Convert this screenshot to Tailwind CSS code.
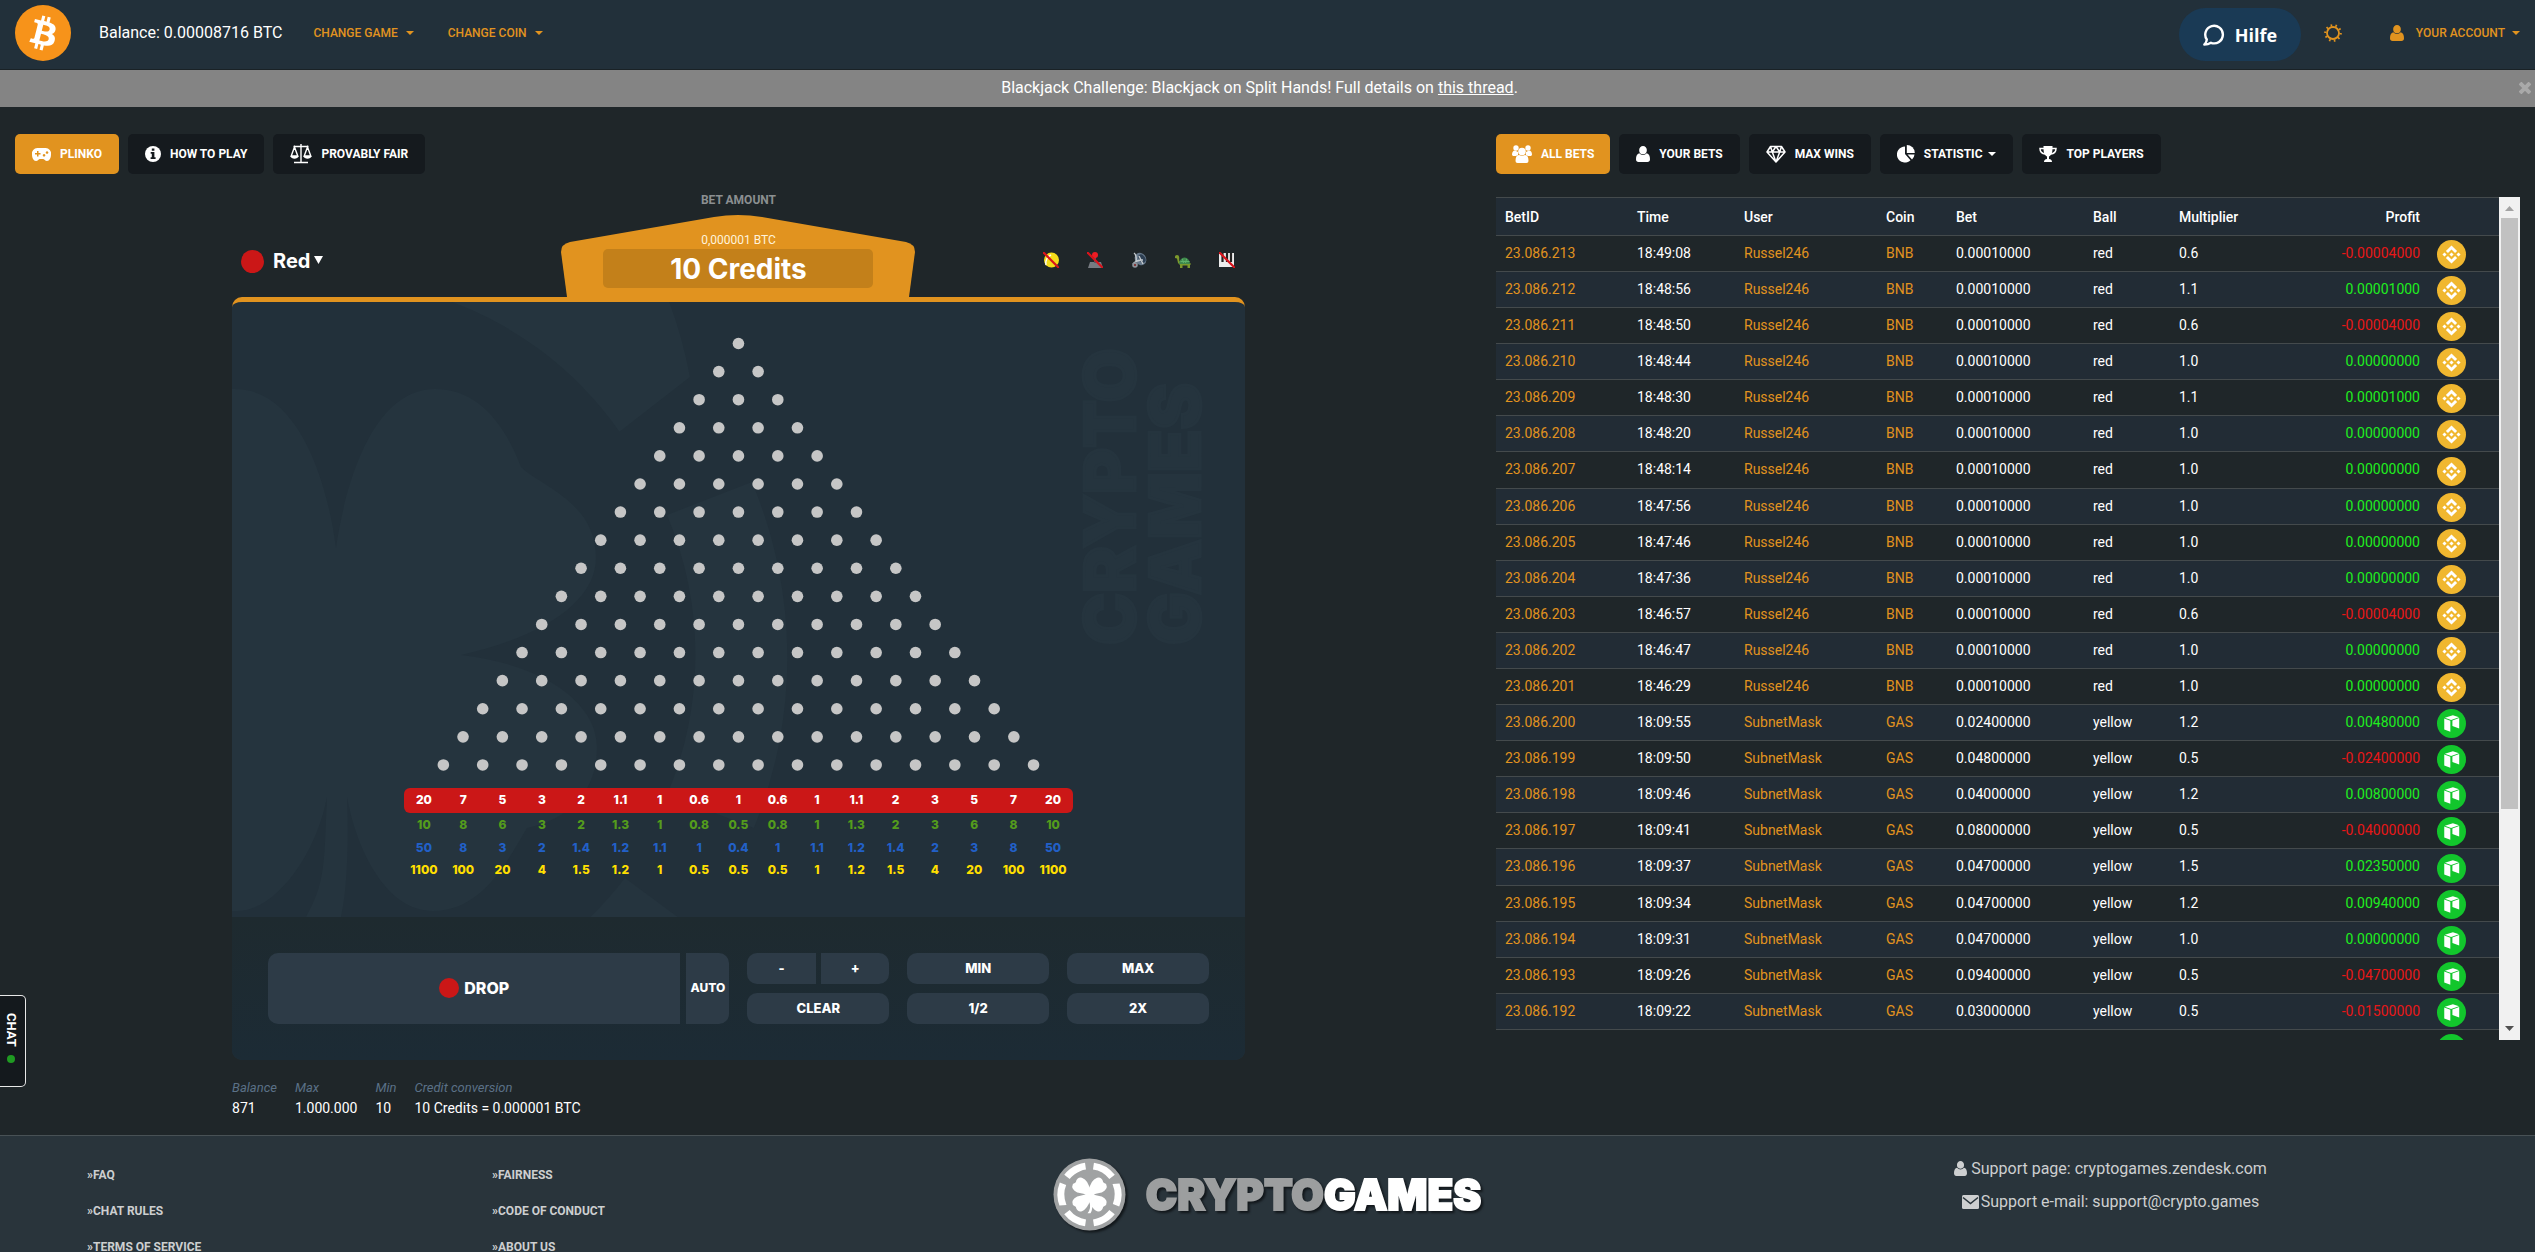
<!DOCTYPE html>
<html lang="en">
<head>
<meta charset="utf-8">
<meta name="viewport" content="width=device-width, initial-scale=1">
<title>Crypto.Games - Plinko</title>
<script src="https://cdn.jsdelivr.net/npm/@tailwindcss/browser@4"></script>
</head>
<body class="min-h-screen bg-[#1f2629] font-['Roboto',sans-serif] text-sm text-white">

<svg class="hidden" aria-hidden="true">
  <symbol id="user" viewBox="0 0 14 16"><path fill="currentColor" d="M7 0a3.8 3.8 0 0 1 3.8 4A4 4 0 0 1 7 8.200A4 4 0 0 1 3.200 4A3.800 3.800 0 0 1 7 0zM3.300 7.300A5 5 0 0 0 7 9a5 5 0 0 0 3.700-1.700C13 7.700 14 10 14 13.200C14 15 13 16 11.500 16h-9C1 16 0 15 0 13.200C0 10 1 7.700 3.300 7.300z"/></symbol>
  <symbol id="bnb" viewBox="0 0 32 32"><circle cx="16" cy="16" r="16" fill="#f0b72f"/><path fill="#fff" d="M12.100 14.400 16 10.500l3.900 3.900 2.300-2.300L16 6l-6.200 6.200zM6 16l2.300-2.300L10.500 16l-2.200 2.300zM12.100 17.600 16 21.500l3.900-3.900 2.300 2.200L16 26l-6.200-6.200zM21.500 16l2.200-2.300L26 16l-2.300 2.300zM18.300 16 16 18.300 13.700 16l2.300-2.300z"/></symbol>
  <symbol id="gas" viewBox="0 0 32 32"><circle cx="16" cy="16" r="16" fill="#12c62c"/><path fill="#fff" d="M8 10.500 14.700 13v12L8 22.600z"/><path fill="#fff" d="M8.700 9.700 17.500 7l6.800 2.200-8.800 3z"/><path fill="#fff" d="M17 12.600 24.500 10v11.500L17 18.700z"/></symbol>
</svg>

<header class="flex h-[70px] items-center border-b border-[#1a2226] bg-[#22303a] pr-[15px] pl-[15px]">
  <a href="#" aria-label="Bitcoin" class="-mt-1"><svg class="size-[56px]" viewBox="0 0 32 32"><circle cx="16" cy="16" r="16" fill="#f7931a"/><path fill="#fff" d="M23.189 14.020c.314-2.096-1.283-3.223-3.465-3.975l.708-2.840-1.728-.430-.690 2.765c-.454-.114-.920-.220-1.385-.326l.695-2.783L15.596 6l-.708 2.839c-.376-.086-.746-.170-1.104-.260l.002-.009-2.384-.595-.460 1.846s1.283.294 1.256.312c.700.175.826.638.805 1.006l-.806 3.235c.048.012.110.030.180.057l-.183-.045-1.130 4.532c-.086.212-.303.531-.793.410.018.025-1.256-.313-1.256-.313l-.858 1.978 2.250.561c.418.105.828.215 1.231.318l-.715 2.872 1.727.430.708-2.840c.472.127.930.245 1.378.357l-.706 2.828 1.728.430.715-2.866c2.948.558 5.164.333 6.097-2.333.752-2.146-.037-3.385-1.588-4.192 1.130-.260 1.980-1.003 2.207-2.538zm-3.950 5.538c-.533 2.147-4.148.986-5.320.695l.950-3.805c1.172.293 4.929.872 4.370 3.110zm.535-5.569c-.487 1.953-3.495.960-4.470.717l.860-3.450c.975.243 4.118.696 3.610 2.733z"/></svg></a>
  <span class="-mt-1 ml-[28px] text-base">Balance: 0.00008716 BTC</span>
  <nav class="-mt-1 ml-[31px] flex gap-[34px] text-xs font-medium text-[#e1931f]">
    <a href="#" class="flex items-center gap-[8px]">CHANGE GAME <svg class="h-1 w-2" viewBox="0 0 8 4"><path fill="currentColor" d="M0 0h8L4 4z"/></svg></a>
    <a href="#" class="flex items-center gap-[8px]">CHANGE COIN <svg class="h-1 w-2" viewBox="0 0 8 4"><path fill="currentColor" d="M0 0h8L4 4z"/></svg></a>
  </nav>
  <button class="ml-auto flex h-[53px] w-[122px] items-center justify-center gap-[10px] rounded-full bg-[#1a3a55] font-['Open_Sans',sans-serif] text-lg font-bold">
    <svg class="size-[22px]" viewBox="0 0 22 22" fill="none" stroke="#fff" stroke-width="2.400" stroke-linejoin="round"><path d="M3.800 15.500A8.800 8.800 0 1 1 8 18.800C6 20 3.500 20.500 1.300 20.500C2.800 19 3.800 17.500 3.800 15.500z"/></svg>
    Hilfe
  </button>
  <a href="#" aria-label="Theme" class="-mt-1 ml-[23px] text-[#e1931f]"><svg class="size-[18px]" viewBox="-9 -9 18 18"><circle r="6" fill="none" stroke="currentColor" stroke-width="1.800"/><circle r="7.700" fill="none" stroke="currentColor" stroke-width="2.200" pathLength="120" stroke-dasharray="4 8"/></svg></a>
  <a href="#" class="-mt-1 ml-[48px] flex items-center text-xs font-medium text-[#e1931f]"><svg class="mr-[12px] h-4 w-[14px]"><use href="#user"/></svg>YOUR ACCOUNT <svg class="ml-[7px] h-1 w-2" viewBox="0 0 8 4"><path fill="currentColor" d="M0 0h8L4 4z"/></svg></a>
</header>

<div class="flex h-[37px] items-center bg-[#848484] pr-1 pb-[2px] text-base">
  <p class="flex-1 text-center">Blackjack Challenge: Blackjack on Split Hands! Full details on <a href="#" class="underline">this thread</a>.</p>
  <button aria-label="Close"><svg class="size-3" viewBox="0 0 12 12" stroke="#a9a9a9" stroke-width="4"><path d="M1 1l10 10M11 1L1 11"/></svg></button>
</div>

<main class="flex gap-[34px] px-[15px] pt-[27px] pb-[17px]">
  <section class="min-w-0 flex-[1447]">
    <nav class="flex gap-[9px] text-xs font-bold">
      <a href="#" class="flex h-10 items-center gap-[9px] rounded-[5px] bg-[#e1931f] px-[17px]"><svg class="h-[13px] w-[19px]" viewBox="0 0 19 13"><path fill="#fff" fill-rule="evenodd" d="M5.500 0h8a5.500 5.500 0 0 1 5.500 6.500C19 10 17.500 13 15 13c-2 0-2.500-2-4-2H8c-1.500 0-2 2-4 2C1.500 13 0 10 0 6.500A5.500 5.500 0 0 1 5.500 0zM5 3v2H3v1.500h2v2h1.500v-2h2V5h-2V3zM12 6a1.300 1.300 0 1 0 .1 0zM15 3.200a1.300 1.300 0 1 0 .1 0z"/></svg>PLINKO</a>
      <a href="#" class="flex h-10 items-center gap-[9px] rounded-[5px] bg-[#151a1e] px-[17px]"><svg class="size-4" viewBox="0 0 16 16"><circle cx="8" cy="8" r="8" fill="#fff"/><path fill="#151a1e" d="M6.800 2.500h2.600v2.200H6.800zM5.700 6h3.700v5.200h1.200V13H5.600v-1.800h1.200V7.700H5.700z"/></svg>HOW TO PLAY</a>
      <a href="#" class="flex h-10 items-center gap-[9px] rounded-[5px] bg-[#151a1e] px-[17px]"><svg class="h-[20px] w-[22px]" viewBox="0 0 22 20" fill="none" stroke="#fff" stroke-width="1.400"><path d="M11 0v18M3.500 2.500h15M4 18.500h14"/><path d="M4.500 3L1.200 12h6.600zM17.500 3l-3.300 9h6.600z"/><path fill="#fff" stroke="none" d="M.5 12h8c-.5 3.500-7.500 3.500-8 0zM13.500 12h8c-.5 3.500-7.500 3.500-8 0z"/></svg>PROVABLY FAIR</a>
    </nav>

    <div class="mx-auto mt-[17px] w-[70%]">
      <div class="grid grid-cols-[1fr_354px_1fr]">
        <button class="mt-[55px] flex h-[30px] items-center gap-[9px] self-start pl-[9px] font-['Inter',sans-serif] text-xl font-bold">
          <span class="size-[23px] rounded-full bg-[#cb1717]"></span><span class="flex items-center gap-[4px]">Red<svg class="mb-[3px] h-2 w-[9px]" viewBox="0 0 9 8"><path fill="#fff" d="M0 0h9L4.500 8z"/></svg></span>
        </button>
        <div class="text-center">
          <label for="bet" class="block h-6 text-xs leading-[18px] font-bold text-[#8b8f91]">BET AMOUNT</label>
          <div class="relative h-[82px] pt-[17px]">
            <svg class="absolute inset-0 size-full" viewBox="0 0 354 82" preserveAspectRatio="none"><path fill="#e1931f" d="M6 82 0 37Q0 29 9 27L153 2Q177-2 201 2L345 27Q354 29 354 37L348 82z"/></svg>
            <p class="relative h-[17px] text-xs leading-[17px] text-[#fff3dc]">0,000001 BTC</p>
            <input id="bet" value="10 Credits" class="relative mx-auto block h-[39px] w-[270px] rounded-[5px] bg-[#c3801a] text-center font-['Inter',sans-serif] text-[28px] font-bold">
          </div>
        </div>
        <div class="mt-[61px] flex h-4 justify-end gap-7 pr-[10px]">
          <button aria-label="Ball"><svg class="size-4" viewBox="0 0 16 16"><circle cx="8.500" cy="8" r="7.500" fill="#f4dc1a"/><path d="M3 13A9 9 0 0 1 8 3" fill="none" stroke="#fff" stroke-width="1.500"/><path d="M0 0l16 16" stroke="#d8131b" stroke-width="2.200"/></svg></button>
          <button aria-label="Joystick"><svg class="size-4" viewBox="0 0 16 16"><path fill="#767a80" d="M3 10h11l2 6H1z"/><path stroke="#565a60" stroke-width="2" d="M8 4v7"/><circle cx="8" cy="3" r="3" fill="#ed1c24"/><path d="M0 0l16 16" stroke="#d8131b" stroke-width="2.200"/></svg></button>
          <button aria-label="Sound"><svg class="size-4" viewBox="0 0 16 16"><ellipse cx="9.500" cy="7" rx="5.500" ry="6.500" fill="#66788a" transform="rotate(-35 9.500 7)"/><ellipse cx="11" cy="6.500" rx="3" ry="4.500" fill="#2c3e52" transform="rotate(-35 11 6.500)"/><path d="M2 12Q5 8 12 8M3 1q3 2 2 9M8 4l4 8" fill="none" stroke="#c4cace" stroke-width="1.400"/><circle cx="4" cy="13" r="2.800" fill="#8c9299"/><circle cx="4" cy="13" r="1" fill="#7d1b1b"/></svg></button>
          <button aria-label="Slow"><svg class="size-4" viewBox="0 0 16 16"><path fill="#7d9a2c" d="M0 4.500Q0 3 2 3t2.200 2v3.500L6 11h9.500v2H15v3h-2.500v-2.500h-5V16H5v-3L3 11 2 6.500 0 6z"/><path fill="#3f8a4c" d="M4 12Q4.500 6 9.500 5.500 14.500 6 15 12z"/><path d="M7.500 7l1 4M11.500 7l-1 4M5.500 9.500h9" fill="none" stroke="#5fb36c"/></svg></button>
          <button aria-label="Piano"><svg class="size-4" viewBox="0 0 16 16"><path fill="#ececec" d="M0 1h15v14H0z"/><path d="M3.500 1v9M8 1v9M12 1v9" stroke="#222" stroke-width="2.200"/><path d="M0 0l16 16" stroke="#d8131b" stroke-width="2.200"/></svg></button>
        </div>
      </div>

      <div class="overflow-hidden rounded-[10px] border-t-[5px] border-[#e1931f] bg-[#22303a]">
        <div class="relative pb-9">
          <svg class="absolute inset-0 size-full" viewBox="0 0 1013 615" preserveAspectRatio="xMidYMid slice">
            <g fill="#25343e">
              <path d="M387.500 129.700A359 359 0 0 0 -25-3L30-100H385A452 452 0 0 1 458 75z"/>
              <path d="M435 213L520 180A452 452 0 0 1 522 526L435 493A359 359 0 0 0 435 213z"/>
              <path d="M393 576L459 625A452 452 0 0 1 445 640H330A359 359 0 0 0 393 576z"/>
              <path d="M-10 88Q2 86 14 88C72 98 97 190 104 246C112 190 138 87 203 87C245 87 272 120 289 165C310 185 364 200 364 256C364 300 310 335 229 353C310 362 365 400 365 445C365 500 325 520 295 526C275 560 250 609 201 609C155 609 125 550 115 495C117 540 115 590 109 615H74C94 580 92 560 95 495C85 550 45 609 5 609H-10z"/>
            </g>
            <g fill="#25343e" stroke="#25343e" stroke-width="3" font-family="Inter, sans-serif" font-weight="900" font-size="70"><text transform="translate(903 343) rotate(-90)">CRYPTO</text><text transform="translate(968 343) rotate(-90)">GAMES</text></g>
          </svg>
          <svg id="pegs" class="relative block w-full" viewBox="0 0 1013 486" fill="#c6c6c6"></svg>
          <table class="relative mx-auto w-[66%] table-fixed text-center font-['Inter',sans-serif] text-xs font-extrabold">
            <tbody id="odds"></tbody>
          </table>
        </div>
        <div class="flex gap-[18px] bg-linear-to-b from-[#1e2a2f] to-[#1c2b35] p-9 font-['Inter',sans-serif] text-[13px] font-extrabold">
          <div class="flex h-[71px] flex-[462] gap-[6px]">
            <button class="flex flex-1 items-center justify-center gap-[5px] rounded-l-[10px] bg-[#2d3b47] text-base"><span class="size-5 rounded-full bg-[#cb1717]"></span>DROP</button>
            <button class="w-[43px] rounded-r-[10px] bg-[#2d3b47] text-xs">AUTO</button>
          </div>
          <div class="grid flex-[142] grid-cols-2 grid-rows-2 gap-x-[5px] gap-y-[9px]">
            <button class="rounded-l-[10px] bg-[#2d3b47]">-</button>
            <button class="rounded-r-[10px] bg-[#2d3b47]">+</button>
            <button class="col-span-2 rounded-[10px] bg-[#2d3b47]">CLEAR</button>
          </div>
          <div class="grid flex-[142] grid-rows-2 gap-[9px]">
            <button class="rounded-[10px] bg-[#2d3b47]">MIN</button>
            <button class="rounded-[10px] bg-[#2d3b47]">1/2</button>
          </div>
          <div class="grid flex-[142] grid-rows-2 gap-[9px]">
            <button class="rounded-[10px] bg-[#2d3b47]">MAX</button>
            <button class="rounded-[10px] bg-[#2d3b47]">2X</button>
          </div>
        </div>
      </div>

      <dl class="mt-[18px] flex gap-[18px] leading-5">
        <div><dt class="text-[13px] leading-5 text-[#5b7187] italic">Balance</dt><dd>871</dd></div>
        <div><dt class="text-[13px] leading-5 text-[#5b7187] italic">Max</dt><dd>1.000.000</dd></div>
        <div><dt class="text-[13px] leading-5 text-[#5b7187] italic">Min</dt><dd>10</dd></div>
        <div><dt class="text-[13px] leading-5 text-[#5b7187] italic">Credit conversion</dt><dd>10 Credits = 0.000001 BTC</dd></div>
      </dl>
    </div>
  </section>

  <section class="min-w-0 flex-[1024]">
    <nav class="flex gap-[9px] text-xs font-bold">
      <a href="#" class="flex h-10 items-center gap-[9px] rounded-[5px] bg-[#e1931f] px-4"><svg class="h-[18px] w-[20px]" viewBox="0 0 20 18" fill="#fff"><circle cx="4" cy="3" r="2.700"/><circle cx="16" cy="3" r="2.700"/><circle cx="10" cy="6.500" r="3.800"/><path d="M0 10Q0 5.500 3 5.500l3 1.500v3l-2 1H1zM20 10q0-4.500-3-4.500L14 7v3l2 1h3zM3.500 16q0-6 3.500-6 3 1.500 6 0 3.500 0 3.500 6 0 2-2 2h-9q-2 0-2-2z"/></svg>ALL BETS</a>
      <a href="#" class="flex h-10 items-center gap-[9px] rounded-[5px] bg-[#151a1e] px-[17px]"><svg class="h-4 w-[14px]"><use href="#user"/></svg>YOUR BETS</a>
      <a href="#" class="flex h-10 items-center gap-[9px] rounded-[5px] bg-[#151a1e] px-[17px]"><svg class="h-[18px] w-[20px]" viewBox="0 0 20 18" fill="none" stroke="#fff" stroke-width="1.500" stroke-linejoin="round"><path d="M4.500 1.500h11L19 7l-9 10L1 7zM1 7h18M10 1.500L6.300 7 10 17l3.700-10zM4.500 1.500L6.300 7M15.500 1.500L13.700 7"/></svg>MAX WINS</a>
      <a href="#" class="flex h-10 items-center gap-[9px] rounded-[5px] bg-[#151a1e] px-[17px]"><svg class="size-[18px]" viewBox="0 0 18 18" fill="#fff"><path d="M8 1.500V9l5.500 6.200A8 8 0 1 1 8 1.500z"/><path d="M9.800 0A8 8 0 0 1 17.800 8h-8z"/><path d="M10.500 9.500h7a7.500 7.500 0 0 1-2.500 5z"/></svg><span class="flex items-center gap-[6px]">STATISTIC <svg class="h-1 w-2" viewBox="0 0 8 4"><path fill="currentColor" d="M0 0h8L4 4z"/></svg></span></a>
      <a href="#" class="flex h-10 items-center gap-[9px] rounded-[5px] bg-[#151a1e] px-[17px]"><svg class="h-4 w-[18px]" viewBox="0 0 18 16"><path fill="#fff" d="M4.500 0h9v2c0 5-1 7-3.500 8.500V13q3 .3 3 3H5q0-2.700 3-3v-2.500C5.500 9 4.500 7 4.500 2z"/><path d="M5 2.500H1Q1 7.500 6.500 8M13 2.500h4q0 5-5.500 5.500" fill="none" stroke="#fff" stroke-width="1.500"/></svg>TOP PLAYERS</a>
    </nav>

    <div class="mt-[23px] flex h-[843px]">
      <div class="min-w-0 flex-1 overflow-hidden">
        <table class="w-full table-fixed text-left">
          <colgroup><col class="w-[132px]"><col class="w-[107px]"><col class="w-[142px]"><col class="w-[70px]"><col class="w-[137px]"><col class="w-[86px]"><col class="w-[120px]"><col class="w-[139px]"><col class="w-[70px]"></colgroup>
          <thead>
            <tr class="h-[38px] border-y border-[#444a4c] bg-[#222c35]">
              <th class="px-[9px] font-medium">BetID</th><th class="px-[9px] font-medium">Time</th><th class="px-[9px] font-medium">User</th><th class="px-[9px] font-medium">Coin</th><th class="px-[9px] font-medium">Bet</th><th class="px-[9px] font-medium">Ball</th><th class="px-[9px] font-medium">Multiplier</th><th class="px-[9px] text-right font-medium">Profit</th><th></th>
            </tr>
          </thead>
          <tbody id="bets"></tbody>
        </table>
      </div>
      <div class="flex w-[21px] flex-col items-center bg-[#f1f1f1]" aria-hidden="true">
        <svg class="h-[21px] w-[9px]" viewBox="0 0 9 21"><path fill="#a3a3a3" d="M0 14h9L4.500 9z"/></svg>
        <div class="h-[591px] w-[17px] bg-[#c1c1c1]"></div>
        <svg class="mt-auto h-[21px] w-[9px]" viewBox="0 0 9 21"><path fill="#505050" d="M0 7h9l-4.500 5z"/></svg>
      </div>
    </div>
  </section>
</main>

<footer class="grid grid-cols-[405fr_405fr_914fr_773fr] border-t border-[#485155] bg-[#29343b] pr-[38px] pb-10 text-[#cdcfd0]">
  <ul class="flex flex-col gap-[18px] pt-[30px] pl-[87px] text-xs leading-[18px] font-bold">
    <li><a href="#">»FAQ</a></li><li><a href="#">»CHAT RULES</a></li><li><a href="#">»TERMS OF SERVICE</a></li>
  </ul>
  <ul class="flex flex-col gap-[18px] pt-[30px] pl-[87px] text-xs leading-[18px] font-bold">
    <li><a href="#">»FAIRNESS</a></li><li><a href="#">»CODE OF CONDUCT</a></li><li><a href="#">»ABOUT US</a></li>
  </ul>
  <a href="#" class="mt-[22px] flex h-[74px] items-center gap-5 self-start justify-self-center font-['Inter',sans-serif] text-[42px] font-black text-[#9c9e9f] drop-shadow-[2px_2px_1px_#11161a] [-webkit-text-stroke:2px_currentColor]">
    <svg class="size-[73px]" viewBox="-37 -37 74 74"><circle r="36.500" fill="#a0a2a3"/><circle r="29" fill="none" stroke="#fff" stroke-width="7" pathLength="360" stroke-dasharray="44 16" transform="rotate(-22)"/><g fill="#fff" stroke="#fff" stroke-width="2"><path d="M0 0Q-6-2-12-3Q-18-6-16-10Q-14-11-13-12Q-12-17-8-16Q-2-14 0-3Q2-14 8-16Q12-17 13-12Q14-11 16-10Q18-6 12-3Q6-2 1 0Q6 2 12 3Q18 6 16 10Q14 11 13 12Q12 17 8 16Q3 14 0 5Q-3 14-8 16Q-12 17-13 12Q-14 11-16 10Q-18 6-12 3z"/><path stroke="none" d="M0 8q2 6-2 11h3q3-5 1-11z"/></g></svg>
    <span>CRYPTO<span class="text-white">GAMES</span></span>
  </a>
  <div class="flex flex-col items-center gap-[9px] pt-[21px] text-base">
    <a href="#" class="flex items-center gap-[4px]"><svg class="h-[15px] w-[13px]"><use href="#user"/></svg>Support page: cryptogames.zendesk.com</a>
    <a href="#" class="flex items-center gap-[2px]"><svg class="h-[14px] w-[17px]" viewBox="0 0 17 14"><rect width="17" height="14" rx="1.500" fill="currentColor"/><path d="M1 2.500l7.500 6 7.500-6" fill="none" stroke="#29343b" stroke-width="1.600"/></svg>Support e-mail: support@crypto.games</a>
  </div>
</footer>

<button class="fixed top-[995px] left-0 flex h-[92px] w-[26px] flex-col items-center justify-center gap-[8px] rounded-r-[5px] border border-l-0 border-[#e8e8e8] bg-[#14191d] pr-1 pb-[6px] text-[13px] font-bold"><span class="[writing-mode:vertical-rl]">CHAT</span><span class="size-2 rounded-full bg-[#1f9a22]"></span></button>

<script>
  const svgNs = 'http://www.w3.org/2000/svg';
  const pegs = document.getElementById('pegs');
  for (let r = 0; r < 16; r++) {
    for (let i = 0; i <= r; i++) {
      const c = document.createElementNS(svgNs, 'circle');
      c.setAttribute('cx', 506.5 + (i - r / 2) * 39.35);
      c.setAttribute('cy', 41.5 + r * 28.1);
      c.setAttribute('r', 5.800);
      pegs.appendChild(c);
    }
  }

  const odds = [
    ['h-[25px] text-white', '20 7 5 3 2 1.1 1 0.6 1 0.6 1 1.1 2 3 5 7 20'],
    ['h-[24px] text-[#549c1c]', '10 8 6 3 2 1.3 1 0.8 0.5 0.8 1 1.3 2 3 6 8 10'],
    ['h-[22px] text-[#2260c8]', '50 8 3 2 1.4 1.2 1.1 1 0.4 1 1.1 1.2 1.4 2 3 8 50'],
    ['h-[22px] text-[#ffdf00]', '1100 100 20 4 1.5 1.2 1 0.5 0.5 0.5 1 1.2 1.5 4 20 100 1100']
  ];
  document.getElementById('odds').innerHTML = odds.map(([cls, vals], n) =>
    `<tr class="${cls}">` + vals.split(' ').map(v =>
      `<td class="${n ? 'p-0' : 'bg-[#cb1717] p-0 first:rounded-l-[6px] last:rounded-r-[6px]'}">${v}</td>`).join('') + '</tr>').join('');

  const bets = `213 18:49:08 0.6 -0.00004000|212 18:48:56 1.1 0.00001000|211 18:48:50 0.6 -0.00004000|210 18:48:44 1.0 0.00000000|209 18:48:30 1.1 0.00001000|208 18:48:20 1.0 0.00000000|207 18:48:14 1.0 0.00000000|206 18:47:56 1.0 0.00000000|205 18:47:46 1.0 0.00000000|204 18:47:36 1.0 0.00000000|203 18:46:57 0.6 -0.00004000|202 18:46:47 1.0 0.00000000|201 18:46:29 1.0 0.00000000|200 18:09:55 1.2 0.00480000 0.02400000|199 18:09:50 0.5 -0.02400000 0.04800000|198 18:09:46 1.2 0.00800000 0.04000000|197 18:09:41 0.5 -0.04000000 0.08000000|196 18:09:37 1.5 0.02350000 0.04700000|195 18:09:34 1.2 0.00940000 0.04700000|194 18:09:31 1.0 0.00000000 0.04700000|193 18:09:26 0.5 -0.04700000 0.09400000|192 18:09:22 0.5 -0.01500000 0.03000000`;
  document.getElementById('bets').innerHTML = bets.split('|').map(line => {
    const [id, time, mult, profit, bet] = line.split(' ');
    const color = profit[0] === '-' ? 'text-[#e81717]' : 'text-[#1fee1f]';
    return `<tr class="h-9 border-b border-[#444a4c] even:bg-[#222c35] nth-[11n+7]:h-[37px]">
      <td class="px-[9px] pt-0 pb-[2px]"><a href="#" class="text-[#e1931f]">23.086.${id}</a></td>
      <td class="px-[9px] pt-0 pb-[2px]">${time}</td>
      <td class="px-[9px] pt-0 pb-[2px]"><a href="#" class="text-[#e1931f]">${bet ? 'SubnetMask' : 'Russel246'}</a></td>
      <td class="px-[9px] pt-0 pb-[2px]"><a href="#" class="text-[#e1931f]">${bet ? 'GAS' : 'BNB'}</a></td>
      <td class="px-[9px] pt-0 pb-[2px]">${bet || '0.00010000'}</td>
      <td class="px-[9px] pt-0 pb-[2px]">${bet ? 'yellow' : 'red'}</td>
      <td class="px-[9px] pt-0 pb-[2px]">${mult}</td>
      <td class="px-[9px] pt-0 pb-[2px] text-right ${color}">${profit}</td>
      <td class="pt-[2px] pb-0 pl-2"><svg class="size-[29px]"><use href="#${bet ? 'gas' : 'bnb'}"/></svg></td>
    </tr>`;
  }).join('') + `<tr class="h-9"><td colspan="8"></td><td class="pt-[2px] pb-0 pl-2"><svg class="size-[29px]"><use href="#gas"/></svg></td></tr>`;
</script>
</body>
</html>
